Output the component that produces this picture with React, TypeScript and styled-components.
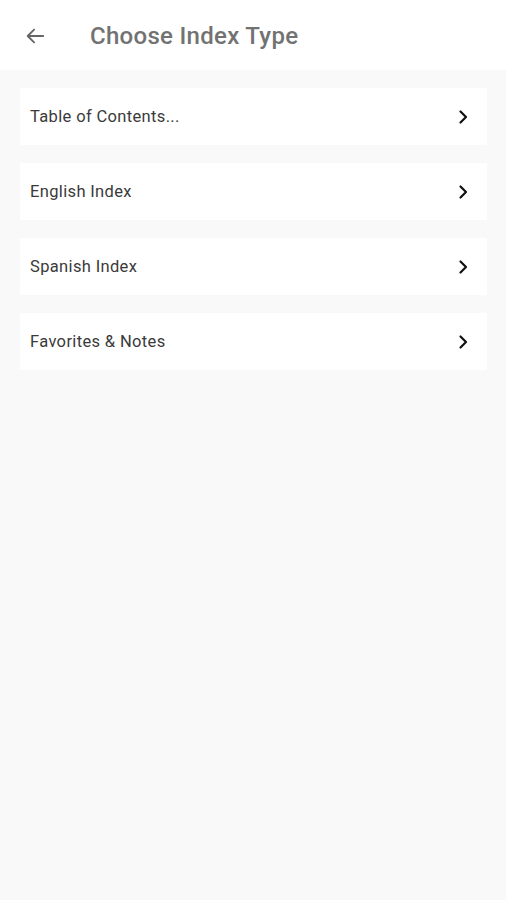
import React from 'react';
import styled, { createGlobalStyle } from 'styled-components';

const GlobalStyle = createGlobalStyle`
    html, body {
        margin: 0;
        padding: 0;
        background: #f9f9f9;
        font-family: Roboto, 'Noto Sans', sans-serif;
    }
`;

const Screen = styled.div`
    width: 506px;
    min-height: 900px;
    background: #f9f9f9;
`;

const Header = styled.div`
    height: 70px;
    background: #fff;
    display: flex;
    align-items: center;
    padding-left: 23px;
    padding-top: 2px;
    box-sizing: border-box;
`;

const BackButton = styled.span`
    width: 24px;
    height: 24px;
    display: flex;
    align-items: center;
    justify-content: center;
    margin-right: 43px;
`;

const Title = styled.h1`
    margin: 0;
    font-size: 24px;
    font-weight: 500;
    color: #727272;
    letter-spacing: 0.3px;
`;

const List = styled.div`
    display: flex;
    flex-direction: column;
    gap: 18px;
    padding: 18px 19px 0 20px;
`;

const Row = styled.div`
    height: 57px;
    background: #fff;
    display: flex;
    align-items: center;
    justify-content: space-between;
    padding: 0 18px 0 10px;
`;

const Label = styled.span`
    font-size: 16.5px;
    color: #3a3a3a;
    letter-spacing: 0.35px;
`;

const items = ['Table of Contents...', 'English Index', 'Spanish Index', 'Favorites & Notes'];

const App: React.FC = () => {
    return (
        <Screen>
            <GlobalStyle />
            <Header>
                <BackButton>
                    <svg width='22' height='22' viewBox='0 0 24 24' fill='none'>
                        <path d='M21 12H4M11 5l-7 7 7 7' stroke='#666' strokeWidth='2' strokeLinecap='round' strokeLinejoin='round' />
                    </svg>
                </BackButton>
                <Title>Choose Index Type</Title>
            </Header>
            <List>
                {items.map(item => (
                    <Row key={item}>
                        <Label>{item}</Label>
                        <svg width='12' height='16' viewBox='0 0 12 16' fill='none'>
                            <path d='M3.5 2.5l5.5 5.5-5.5 5.5' stroke='#111' strokeWidth='2.2' strokeLinecap='round' strokeLinejoin='round' />
                        </svg>
                    </Row>
                ))}
            </List>
        </Screen>
    );
};

export default App;
